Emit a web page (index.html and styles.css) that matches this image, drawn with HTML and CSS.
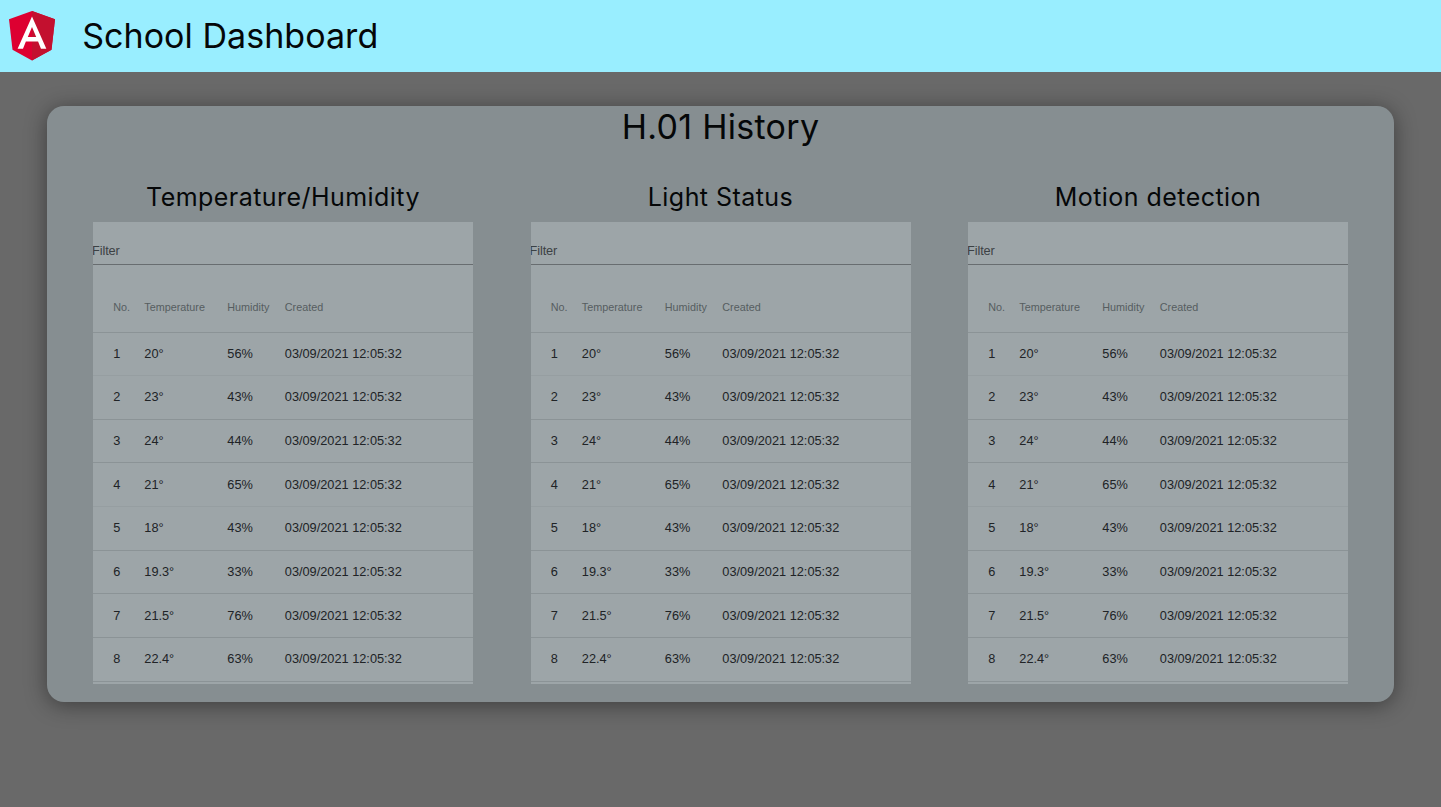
FILE: index.html
```
<!DOCTYPE html>
<html lang="en">
<head>
<meta charset="utf-8">
<title>School Dashboard</title>
<link rel="stylesheet" href="styles.css">
</head>
<body>
<header class="topbar">
  <svg class="logo" viewBox="31.9 30 186.2 200" aria-hidden="true">
    <polygon fill="#dd0031" points="125,30 31.9,63.2 46.1,186.3 125,230 203.9,186.3 218.1,63.2"/>
    <polygon class="logo-shade" points="125,30 125,230 203.9,186.3 218.1,63.2"/>
    <path fill="#fff" d="M125 52.1 66.8 182.6h21.7l11.7-29.2h49.4l11.7 29.2H183L125 52.1zm17 83.3h-34l17-40.9 17 40.9z"/>
  </svg>
  <h1 class="brand">School Dashboard</h1>
</header>
<main class="card">
  <h2 class="card-title">H.01 History</h2>
  <div class="columns" id="columns"></div>
</main>
<script src="app.js"></script>
</body>
</html>
```
FILE: styles.css
```
* { box-sizing: border-box; }
body {
  margin: 0;
  height: 807px;
  overflow: hidden;
  background: #696969;
  font-family: Inter, sans-serif;
  color: #050708;
}
.topbar {
  height: 71.5px;
  background: #99eeff;
  display: flex;
  align-items: center;
  padding-left: 8.7px;
}
.logo { width: 46px; height: 49.5px; }
.logo-shade { fill: #c3102f; }
.brand {
  margin: 0 0 0 27.5px;
  font-size: 34px;
  font-weight: 400;
  letter-spacing: 0.05px;
  line-height: 72px;
}
.card {
  margin: 34px 47px 0;
  height: 596.7px;
  border-radius: 17px;
  background: #868e91;
  box-shadow: 0 3px 22px rgba(0, 0, 0, 0.42);
}
.card-title {
  margin: 0;
  height: 43px;
  text-align: center;
  font-size: 34px;
  font-weight: 400;
  letter-spacing: 0.3px;
  line-height: 41.4px;
}
.columns {
  display: grid;
  grid-template-columns: repeat(3, 380px);
  column-gap: 57.5px;
  padding: 30px 0 0 46px;
}
.column-title {
  margin: 0;
  height: 43px;
  text-align: center;
  font-size: 25px;
  font-weight: 400;
  letter-spacing: 0.45px;
  line-height: 37px;
}
.panel {
  height: 462px;
  overflow: hidden;
  background: #9da5a8;
  font-family: "Liberation Sans", Arial, sans-serif;
}
.filter {
  height: 43px;
  padding-top: 19px;
  border-bottom: 1px solid #686d70;
  font-size: 12.75px;
  letter-spacing: -0.1px;
  text-indent: -1px;
  line-height: 20px;
  color: #3c4144;
}
.row {
  display: grid;
  grid-template-columns: 31px 83px 57.5px 1fr;
  padding: 0 0 1px 20.3px;
  height: 43.65px;
  align-items: center;
  border-bottom: 1px solid #8b9396;
  font-size: 12.75px;
  color: #202326;
}
.row.faint { border-bottom-color: #969ea1; }
.row.head {
  height: 68px;
  padding-top: 18px;
  font-size: 10.8px;
  color: #565d60;
}
```
FILE: app.js
```
const readings = [
  ["20°", "56%"], ["23°", "43%"], ["24°", "44%"], ["21°", "65%"],
  ["18°", "43%"], ["19.3°", "33%"], ["21.5°", "76%"], ["22.4°", "63%"]
];
const row = (cells, cls) =>
  `<div class="row ${cls}">${cells.map(c => `<span>${c}</span>`).join("")}</div>`;
const rows = readings
  .map(([t, h], i) => row([i + 1, t, h, "03/09/2021 12:05:32"], i === 0 || i === 3 ? "faint" : ""))
  .join("");
document.getElementById("columns").innerHTML =
  ["Temperature/Humidity", "Light Status", "Motion detection"].map(title => `
    <section>
      <h3 class="column-title">${title}</h3>
      <div class="panel">
        <div class="filter">Filter</div>
        ${row(["No.", "Temperature", "Humidity", "Created"], "head")}
        ${rows}
      </div>
    </section>`).join("");
```
